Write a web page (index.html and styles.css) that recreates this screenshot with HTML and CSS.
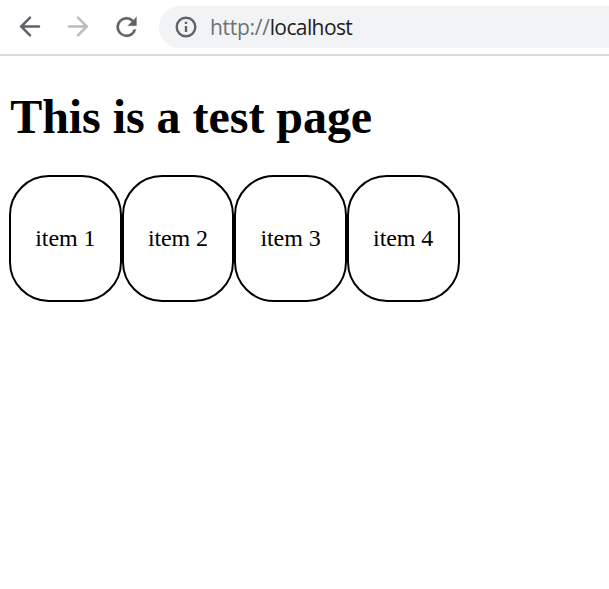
FILE: index.html
```
<!DOCTYPE html>
<html lang="en">
<head>
<meta charset="utf-8">
<title>Test page</title>
<link rel="stylesheet" href="styles.css">
</head>
<body>
<header class="toolbar">
  <nav class="controls">
    <svg class="icon" viewBox="0 0 30 30"><path d="M24 14.5H6.5M15 5.7L6.2 14.5L15 23.3"/></svg>
    <svg class="icon icon-disabled" viewBox="0 0 30 30"><path d="M6 14.5H23.5M15 5.7L23.8 14.5L15 23.3"/></svg>
    <svg class="icon icon-reload" viewBox="0 0 24 24"><path d="M17.65 6.35A7.958 7.958 0 0 0 12 4a8 8 0 1 0 7.73 10h-2.08A5.99 5.99 0 0 1 12 18a6 6 0 1 1 4.22-10.22L13 11h7V4z"/></svg>
  </nav>
  <div class="address">
    <svg class="info" viewBox="0 0 22 22"><circle cx="11" cy="11" r="9.3"/><path d="M11 10v6M11 5.8v2.3"/></svg>
    <span class="url"><span class="scheme">http://</span>localhost</span>
  </div>
</header>
<main class="page">
  <h1>This is a test page</h1>
  <div class="items">
    <div class="item">item 1</div>
    <div class="item">item 2</div>
    <div class="item">item 3</div>
    <div class="item">item 4</div>
  </div>
</main>
</body>
</html>
```
FILE: styles.css
```
* { box-sizing: border-box; }
body {
  margin: 0;
  background: #fff;
  color: #000;
  font-family: "Liberation Serif", serif;
  overflow: hidden;
}
.toolbar {
  display: flex;
  align-items: flex-start;
  height: 56px;
  padding-top: 6px;
  border-bottom: 2px solid #dadbdc;
}
.controls {
  display: flex;
  gap: 18px;
  padding: 6px 18px 0 15px;
}
.icon {
  width: 30px;
  height: 30px;
  fill: none;
  stroke: #5f6368;
  stroke-width: 2.5;
  stroke-linecap: round;
}
.icon-disabled { stroke: #babcbe; }
.icon-reload {
  width: 31px;
  fill: #5f6368;
  stroke: #5f6368;
  stroke-width: 0.2;
}
.address {
  display: flex;
  flex: 1;
  align-items: center;
  height: 42px;
  margin-left: -1px;
  padding-left: 16px;
  border-radius: 21px 0 0 21px;
  background: #f1f3f4;
}
.info {
  width: 22px;
  height: 22px;
  margin-right: 13px;
  fill: none;
  stroke: #5f6368;
  stroke-width: 2.4;
}
.url {
  font: 21px/30px "Open Sans", sans-serif;
  letter-spacing: -0.6px;
  color: #202124;
}
.scheme {
  letter-spacing: -0.28px;
  color: #6d7175;
}
.page { padding: 33px 9.2px 0; }
h1 {
  margin: 0;
  padding-left: 1px;
  font-size: 48px;
  line-height: 56px;
  letter-spacing: -0.04px;
}
.items {
  display: flex;
  margin-top: 30px;
}
.item {
  width: 112.6px;
  height: 127px;
  padding: 0 24.1px;
  border: 2px solid #000;
  border-radius: 40px;
  font-size: 24px;
  line-height: 123px;
  letter-spacing: -0.1px;
  white-space: nowrap;
}
```
